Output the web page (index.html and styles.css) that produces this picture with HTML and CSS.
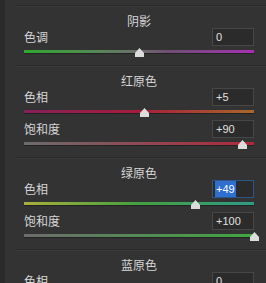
FILE: index.html
```
<!DOCTYPE html>
<html>

<head>
    <link rel="stylesheet" href="styles.css">
</head>

<body>
    <div class="panel">
        <section class="group">
            <div class="title">阴影</div>
            <div class="field">
                <div class="field-top">
                    <span class="label">色调</span>
                    <span class="value">0</span>
                </div>
                <div class="track track-tone">
                    <span class="thumb" style="left:50%"><svg width="9" height="9" viewBox="0 0 9 9"><polygon points="4.5,0 9,5 9,9 0,9 0,5" /></svg></span>
                </div>
            </div>
        </section>

        <section class="group">
            <div class="title">红原色</div>
            <div class="field">
                <div class="field-top">
                    <span class="label">色相</span>
                    <span class="value">+5</span>
                </div>
                <div class="track track-red-hue">
                    <span class="thumb" style="left:52.5%"><svg width="9" height="9" viewBox="0 0 9 9"><polygon points="4.5,0 9,5 9,9 0,9 0,5" /></svg></span>
                </div>
            </div>
            <div class="field">
                <div class="field-top">
                    <span class="label">饱和度</span>
                    <span class="value">+90</span>
                </div>
                <div class="track track-red-sat">
                    <span class="thumb" style="left:95%"><svg width="9" height="9" viewBox="0 0 9 9"><polygon points="4.5,0 9,5 9,9 0,9 0,5" /></svg></span>
                </div>
            </div>
        </section>

        <section class="group">
            <div class="title">绿原色</div>
            <div class="field">
                <div class="field-top">
                    <span class="label">色相</span>
                    <span class="value value-active"><span class="selected">+49</span></span>
                </div>
                <div class="track track-green-hue">
                    <span class="thumb" style="left:74.5%"><svg width="9" height="9" viewBox="0 0 9 9"><polygon points="4.5,0 9,5 9,9 0,9 0,5" /></svg></span>
                </div>
            </div>
            <div class="field">
                <div class="field-top">
                    <span class="label">饱和度</span>
                    <span class="value">+100</span>
                </div>
                <div class="track track-green-sat">
                    <span class="thumb" style="left:100%"><svg width="9" height="9" viewBox="0 0 9 9"><polygon points="4.5,0 9,5 9,9 0,9 0,5" /></svg></span>
                </div>
            </div>
        </section>

        <section class="group">
            <div class="title">蓝原色</div>
            <div class="field">
                <div class="field-top">
                    <span class="label">色相</span>
                    <span class="value">0</span>
                </div>
                <div class="track track-blue-hue">
                    <span class="thumb" style="left:50%"><svg width="9" height="9" viewBox="0 0 9 9"><polygon points="4.5,0 9,5 9,9 0,9 0,5" /></svg></span>
                </div>
            </div>
        </section>
    </div>
</body>

</html>
```

FILE: styles.css
```
html,
body {
    margin: 0;
    overflow: hidden;
}

body {
    background-color: #333333;
    font-family: "Noto Sans CJK SC", "Liberation Sans", sans-serif;
    font-size: 12px;
    color: #d6d6d6;
}

.panel {
    height: 283px;
    padding-top: 5px;
    border-left: 5px solid #2a2a2a;
    box-sizing: border-box;
}

.group {
    margin-left: 11px;
    padding: 0 12px 12px 8px;
    border-top: 1px solid #292929;
    box-shadow: inset 0 1px 0 #3b3b3b;
}

.title {
    padding-top: 8px;
    height: 14px;
    line-height: 14px;
    text-align: center;
}

.field+.field {
    margin-top: 7px;
}

.field-top {
    display: flex;
    justify-content: space-between;
    align-items: center;
    height: 18px;
}

.label {
    line-height: 14px;
}

.value {
    width: 42px;
    height: 18px;
    box-sizing: border-box;
    padding: 0 3px;
    border: 1px solid #474747;
    background-color: #2b2b2b;
    font-family: "Liberation Sans", sans-serif;
    font-size: 11px;
    line-height: 16px;
    color: #e0e0e0;
}

.value-active {
    border-color: #2c5688;
}

.selected {
    display: inline-block;
    padding: 0 1px;
    margin-left: -1px;
    background-color: #2f6fcf;
    color: #ffffff;
}

.track {
    position: relative;
    height: 3px;
    margin-top: 4px;
    box-shadow: 0 1px 0 #222222;
}

.track-tone {
    background: linear-gradient(to right, #2fa82f, #4d8f4d 25%, #6e6e6e 50%, #6e5070 62%, #a62fb4);
}

.track-red-hue {
    background: linear-gradient(to right, #85205a, #a81c3c 50%, #a8682c);
}

.track-red-sat {
    background: linear-gradient(to right, #6c6c6c, #b0283c);
}

.track-green-hue {
    background: linear-gradient(to right, #a8b03c, #44a040 50%, #2f9c86);
}

.track-green-sat {
    background: linear-gradient(to right, #6c6c6c, #3fa83f);
}

.track-blue-hue {
    background: linear-gradient(to right, #2f9c9c, #2f4fb0 50%, #8a2fb0);
}

.thumb {
    position: absolute;
    top: -2px;
    width: 9px;
    height: 9px;
    margin-left: -4.5px;
}

.thumb svg {
    display: block;
    fill: #dcdcdc;
}
```
